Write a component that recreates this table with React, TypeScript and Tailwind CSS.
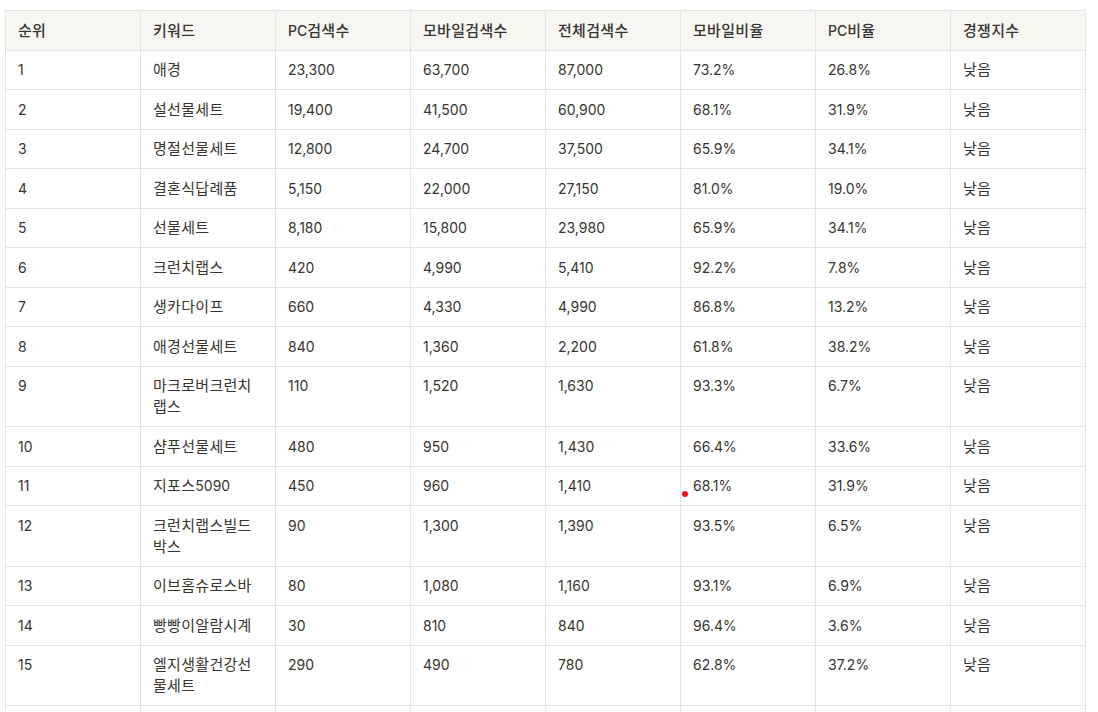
const columns = ['순위', '키워드', 'PC검색수', '모바일검색수', '전체검색수', '모바일비율', 'PC비율', '경쟁지수']

const rows: string[][] = [
  ['1', '애경', '23,300', '63,700', '87,000', '73.2%', '26.8%', '낮음'],
  ['2', '설선물세트', '19,400', '41,500', '60,900', '68.1%', '31.9%', '낮음'],
  ['3', '명절선물세트', '12,800', '24,700', '37,500', '65.9%', '34.1%', '낮음'],
  ['4', '결혼식답례품', '5,150', '22,000', '27,150', '81.0%', '19.0%', '낮음'],
  ['5', '선물세트', '8,180', '15,800', '23,980', '65.9%', '34.1%', '낮음'],
  ['6', '크런치랩스', '420', '4,990', '5,410', '92.2%', '7.8%', '낮음'],
  ['7', '생카다이프', '660', '4,330', '4,990', '86.8%', '13.2%', '낮음'],
  ['8', '애경선물세트', '840', '1,360', '2,200', '61.8%', '38.2%', '낮음'],
  ['9', '마크로버크런치랩스', '110', '1,520', '1,630', '93.3%', '6.7%', '낮음'],
  ['10', '샴푸선물세트', '480', '950', '1,430', '66.4%', '33.6%', '낮음'],
  ['11', '지포스5090', '450', '960', '1,410', '68.1%', '31.9%', '낮음'],
  ['12', '크런치랩스빌드박스', '90', '1,300', '1,390', '93.5%', '6.5%', '낮음'],
  ['13', '이브홈슈로스바', '80', '1,080', '1,160', '93.1%', '6.9%', '낮음'],
  ['14', '빵빵이알람시계', '30', '810', '840', '96.4%', '3.6%', '낮음'],
  ['15', '엘지생활건강선물세트', '290', '490', '780', '62.8%', '37.2%', '낮음'],
  // next row starts at the bottom edge; its text is below the fold
  ['', '', '', '', '', '', '', ''],
]

// hangul runs get a slightly larger size so their width matches the source font
function Mixed({ text }: { text: string }) {
  const parts = text.match(/[\uac00-\ud7a3]+|[^\uac00-\ud7a3]+/g) ?? []
  return (
    <>
      {parts.map((p, i) =>
        /[\uac00-\ud7a3]/.test(p) ? (
          <span key={i} className="text-[15px] tracking-[0.3px]">
            {p}
          </span>
        ) : (
          <span key={i}>{p}</span>
        )
      )}
    </>
  )
}

export default function App() {
  return (
    <div
      className="relative bg-white pl-[5px] pt-[10px] text-[14px] text-[#37352f]"
      style={{ fontFamily: 'Inter, "Noto Sans CJK KR", sans-serif' }}
    >
      <table className="w-[1081px] table-fixed border-collapse">
        <thead>
          <tr className="bg-[#f7f6f3]">
            {columns.map(col => (
              <th
                key={col}
                className="border border-[#e4e4e2] px-3 py-[8.75px] text-left font-medium leading-[21px]"
              >
                <Mixed text={col} />
              </th>
            ))}
          </tr>
        </thead>
        <tbody>
          {rows.map((row, r) => (
            <tr key={r}>
              {row.map((cell, i) => (
                <td
                  key={i}
                  className="h-[39.5px] border border-[#e4e4e2] px-3 py-[8.75px] align-top leading-[21px] break-all"
                >
                  <Mixed text={cell} />
                </td>
              ))}
            </tr>
          ))}
        </tbody>
      </table>
      <span className="absolute left-[682px] top-[491px] h-[6px] w-[6px] rounded-full bg-[#e8101b]" />
    </div>
  )
}
